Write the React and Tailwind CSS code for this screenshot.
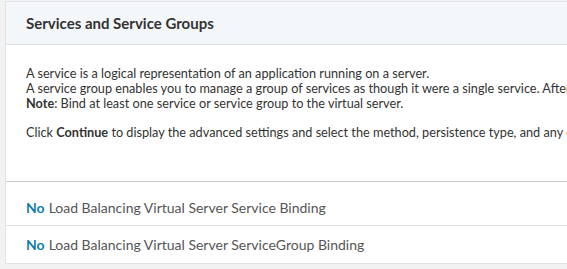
export default function App() {
  return (
    <div className="w-[567px] h-[269px] overflow-hidden bg-[#f2f2f2] pl-[5px] pt-px" style={{fontFamily: "Lato, 'Liberation Sans', sans-serif"}}>
      <div className="w-[600px] border-l border-t border-[#dfe3e8] bg-white">
        <div className="h-[43px] bg-[#f4f7fa] border-b border-[#dfe3e8] pl-[20px] flex items-center">
          <span className="text-[15px] font-bold text-[#333]">Services and Service Groups</span>
        </div>
        <div className="pl-[20px] pt-[21px] pb-[41px] text-[12.7px] leading-[15px] text-[#333] whitespace-nowrap border-b border-[#c8c8c8]">
          <p>A service is a logical representation of an application running on a server.</p>
          <p>A service group enables you to manage a group of services as though it were a single service. After you bind</p>
          <p><span className="font-bold">Note</span>: Bind at least one service or service group to the virtual server.</p>
          <p className="mt-[14px]">Click <span className="font-bold">Continue</span> to display the advanced settings and select the method, persistence type, and any other</p>
        </div>
        <div className="h-[44px] pl-[20px] flex items-center pt-[7px] border-b border-[#e3e3e3] text-[14px] text-[#555] whitespace-nowrap">
          <span className="font-bold text-[#0f7fa6] mr-1">No</span>Load Balancing Virtual Server Service Binding
        </div>
        <div className="h-[38px] pl-[20px] flex items-center border-b border-[#e3e3e3] text-[14px] text-[#555] whitespace-nowrap">
          <span className="font-bold text-[#0f7fa6] mr-1">No</span>Load Balancing Virtual Server ServiceGroup Binding
        </div>
      </div>
    </div>
  );
}
